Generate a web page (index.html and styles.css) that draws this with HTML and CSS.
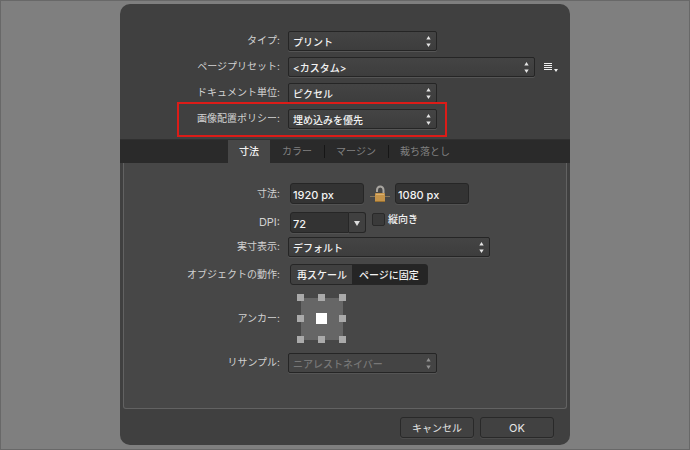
FILE: index.html
```html
<!DOCTYPE html>
<html lang="ja">
<head>
  <meta charset="UTF-8" />
  <meta name="viewport" content="width=device-width, initial-scale=1.0"/>
  <title>ドキュメント設定</title>
  <link rel="stylesheet" href="styles.css">
</head>
<body>
  <svg class="defs" aria-hidden="true">
    <symbol id="arrows" viewBox="0 0 5 11">
      <path d="M0.3 3.5 L2.5 0 L4.7 3.5 Z M0.3 7.5 L4.7 7.5 L2.5 11 Z"/>
    </symbol>
  </svg>

  <form class="dialog">
    <div class="general">
      <div class="row">
        <label for="type">タイプ:</label>
        <div class="select">
          <select id="type"><option>プリント</option></select>
          <svg class="arrows"><use href="#arrows"/></svg>
        </div>
      </div>
      <div class="row">
        <label for="preset">ページプリセット:</label>
        <div class="field">
          <div class="select wide">
            <select id="preset"><option>&lt;カスタム&gt;</option></select>
            <svg class="arrows"><use href="#arrows"/></svg>
          </div>
          <button type="button" class="menu" aria-label="プリセットメニュー">
            <svg width="14" height="9" viewBox="0 0 14 9">
              <path d="M0 0h8v1H0z M0 2h8v1H0z M0 4h8v1H0z M0 6h8v1H0z M10 6h4l-2 3z" fill="#eee"/>
            </svg>
          </button>
        </div>
      </div>
      <div class="row">
        <label for="unit">ドキュメント単位:</label>
        <div class="select">
          <select id="unit"><option>ピクセル</option></select>
          <svg class="arrows"><use href="#arrows"/></svg>
        </div>
      </div>
      <div class="row highlight">
        <label for="policy">画像配置ポリシー:</label>
        <div class="select">
          <select id="policy"><option>埋め込みを優先</option></select>
          <svg class="arrows"><use href="#arrows"/></svg>
        </div>
      </div>
    </div>

    <div class="tabs" role="tablist">
      <button type="button" class="tab active" role="tab" aria-selected="true">寸法</button>
      <button type="button" class="tab" role="tab">カラー</button>
      <button type="button" class="tab" role="tab">マージン</button>
      <button type="button" class="tab" role="tab">裁ち落とし</button>
    </div>

    <div class="panel">
      <div class="row size-row">
        <label for="width">寸法:</label>
        <div class="field inset">
          <input type="text" class="text" id="width" value="1920 px">
          <button type="button" class="lock" aria-label="縦横比をロック">
            <svg width="20" height="18" viewBox="0 0 20 18">
              <path d="M0 11.5h20" stroke="#85745a"/>
              <path d="M7 7V5a3 3.3 0 0 1 6.5 0V9" fill="none" stroke="#a8a5a0" stroke-width="2"/>
              <rect x="5" y="8" width="10" height="9" rx="1" fill="#c4934a"/>
              <path d="M6 9.5h8" stroke="#dab070"/>
              <path d="M5 16.5h10" stroke="#99702f"/>
            </svg>
          </button>
          <input type="text" class="text" id="height" value="1080 px" aria-label="高さ">
        </div>
      </div>
      <div class="row dpi-row">
        <label for="dpi">DPI:</label>
        <div class="field inset">
          <div class="combo">
            <input type="text" class="text" id="dpi" value="72">
            <button type="button" aria-label="DPIを選択">
              <svg width="6" height="6" viewBox="0 0 6 6"><path d="M0 1h6L3 6z" fill="#ddd"/></svg>
            </button>
          </div>
          <div class="check">
            <input type="checkbox" id="portrait">
            <label for="portrait">縦向き</label>
          </div>
        </div>
      </div>
      <div class="row view-row">
        <label for="view">実寸表示:</label>
        <div class="select medium">
          <select id="view"><option>デフォルト</option></select>
          <svg class="arrows"><use href="#arrows"/></svg>
        </div>
      </div>
      <div class="row object-row">
        <span class="label" id="object-label">オブジェクトの動作:</span>
        <div class="segments inset" role="group" aria-labelledby="object-label">
          <button type="button">再スケール</button>
          <button type="button" class="selected" aria-pressed="true">ページに固定</button>
        </div>
      </div>
      <div class="row anchor-row">
        <span class="label" id="anchor-label">アンカー:</span>
        <div class="anchor" role="radiogroup" aria-labelledby="anchor-label">
          <input type="radio" name="anchor" aria-label="左上">
          <input type="radio" name="anchor" aria-label="上">
          <input type="radio" name="anchor" aria-label="右上">
          <input type="radio" name="anchor" aria-label="左">
          <input type="radio" name="anchor" aria-label="中央" checked>
          <input type="radio" name="anchor" aria-label="右">
          <input type="radio" name="anchor" aria-label="左下">
          <input type="radio" name="anchor" aria-label="下">
          <input type="radio" name="anchor" aria-label="右下">
        </div>
      </div>
      <div class="row">
        <label for="resample">リサンプル:</label>
        <div class="select">
          <select id="resample" disabled><option>ニアレストネイバー</option></select>
          <svg class="arrows"><use href="#arrows"/></svg>
        </div>
      </div>
    </div>

    <div class="footer">
      <button type="button">キャンセル</button>
      <button type="submit" class="ok">OK</button>
    </div>
  </form>
</body>
</html>
```

FILE: styles.css
```css
* {
  box-sizing: border-box;
}

body {
  margin: 0;
  min-height: 100vh;
  padding: 3px 20px;
  border: 1px solid #686868;
  background: #7f7f7f;
  font-family: Inter, "Noto Sans CJK JP", sans-serif;
  font-size: 10px;
  line-height: 14px;
  color: #d2d2d2;
}

button, input, select {
  margin: 0;
  padding: 0;
  font: inherit;
  color: inherit;
}

.defs {
  display: none;
}

.dialog {
  max-width: 450px;
  margin: 0 auto;
  border-radius: 10px;
  background: #404040;
  overflow: hidden;
}

.general {
  display: flex;
  flex-direction: column;
  gap: 6px;
  padding: 27px 0 10px;
}

.row {
  display: grid;
  grid-template-columns: 160px 1fr;
  column-gap: 8px;
  align-items: center;
}

.row > label,
.row > .label {
  padding-bottom: 2px;
  text-align: right;
}

.field {
  display: flex;
  align-items: center;
}

.inset {
  margin-left: 2px;
}

/* drop-downs */
.select {
  display: grid;
  align-items: center;
  width: 149px;
}

.select.medium {
  width: 202px;
}

.select.wide {
  width: 247px;
}

.select select {
  grid-area: 1 / 1;
  appearance: none;
  height: 20px;
  padding: 1px 16px 0 4px;
  border: 1px solid #252525;
  border-radius: 2px;
  background: linear-gradient(#444, #3d3d3d);
  box-shadow: 0 1px 0 #555;
  font-weight: 500;
  color: #f2f2f2;
}

.select select:disabled {
  background: #444;
  color: #777;
  opacity: 1;
}

.arrows {
  grid-area: 1 / 1;
  justify-self: end;
  width: 5px;
  height: 11px;
  margin-right: 6px;
  fill: #e4e4e4;
  pointer-events: none;
}

select:disabled + .arrows {
  fill: #929292;
}

.menu, .lock {
  display: flex;
  border: none;
  background: none;
}

.menu {
  margin-left: 9px;
}

.lock {
  margin: 0 5px 0 6px;
}

.highlight {
  position: relative;
}

.highlight::after {
  content: "";
  position: absolute;
  inset: -7px 123px -8px 57px;
  border: 2px solid #dc1c18;
  pointer-events: none;
}

/* tabs */
.tabs {
  display: flex;
  justify-content: center;
  height: 24px;
  border-top: 1px solid #303030;
  background: #2a2a2a;
}

.tab {
  padding: 0 12px 1px;
  border: none;
  background: none;
  color: #808080;
}

.tab + .tab + .tab {
  background: linear-gradient(#161616, #161616) left center / 1px 13px no-repeat;
}

.tab.active {
  padding: 0 11px 1px;
  background: #474747;
  font-weight: 500;
  color: #f2f2f2;
}

.panel {
  margin: 0 3px;
  padding: 20px 0 35px;
  border: 1px solid #626262;
  border-top: none;
  border-radius: 0 0 3px 3px;
  background: #474747;
}

.panel .row {
  grid-template-columns: 156px 1fr;
}

.size-row {
  margin-bottom: 8px;
}

.dpi-row {
  margin-bottom: 4px;
}

.dpi-row > label {
  font-size: 11px;
}

.view-row {
  margin-bottom: 7px;
}

.object-row {
  margin-bottom: 9px;
}

.anchor-row {
  margin-bottom: 10px;
}

.text {
  width: 74px;
  height: 21px;
  padding: 2px 2px 0;
  border: 1px solid #262626;
  border-radius: 3px;
  background: #333;
  box-shadow: 0 1px 0 #525252;
  font-size: 11px;
  font-weight: 500;
  color: #f2f2f2;
}

#dpi {
  width: 59px;
  border-radius: 3px 0 0 3px;
}

.combo {
  display: flex;
}

.combo button {
  display: flex;
  align-items: center;
  justify-content: center;
  width: 17px;
  border: 1px solid #262626;
  border-left: none;
  border-radius: 0 3px 3px 0;
  background: #404040;
}

.check {
  display: flex;
  align-items: center;
  align-self: flex-start;
  gap: 3px;
  margin-left: 6px;
  font-weight: 500;
  color: #f2f2f2;
}

.check input {
  appearance: none;
  width: 13px;
  height: 13px;
  border: 1px solid #292929;
  border-radius: 2px;
  background: #3a3a3a;
}

.segments {
  display: flex;
  justify-self: start;
  height: 21px;
  border: 1px solid #262626;
  border-radius: 3px;
  background: #404040;
}

.segments button {
  padding: 0 5px 0 6px;
  border: none;
  background: none;
  font-weight: 500;
  color: #f2f2f2;
}

.segments .selected {
  padding: 0 8px 0 7px;
  background: #252525;
}

/* anchor picker: 3 x 3 handles on a square */
.anchor {
  display: grid;
  grid-template-columns: repeat(3, 7px);
  grid-template-rows: repeat(3, 7px);
  gap: 14px;
  justify-self: start;
  margin-left: 9px;
  background: linear-gradient(#666, #666) center / 42px 42px no-repeat;
}

.anchor input {
  appearance: none;
  width: 7px;
  height: 7px;
  background: #aaa;
}

.anchor input:checked {
  width: 11px;
  height: 11px;
  margin: -2px;
  background: #fff;
}

.footer {
  display: flex;
  justify-content: flex-end;
  gap: 6px;
  padding: 8px 16px 7px;
}

.footer button {
  width: 74px;
  height: 21px;
  border: 1px solid #292929;
  border-radius: 3px;
  background: #414141;
  box-shadow: 0 1px 0 #4c4c4c;
  color: #e6e6e6;
}

.footer .ok {
  font-size: 11px;
}
```
